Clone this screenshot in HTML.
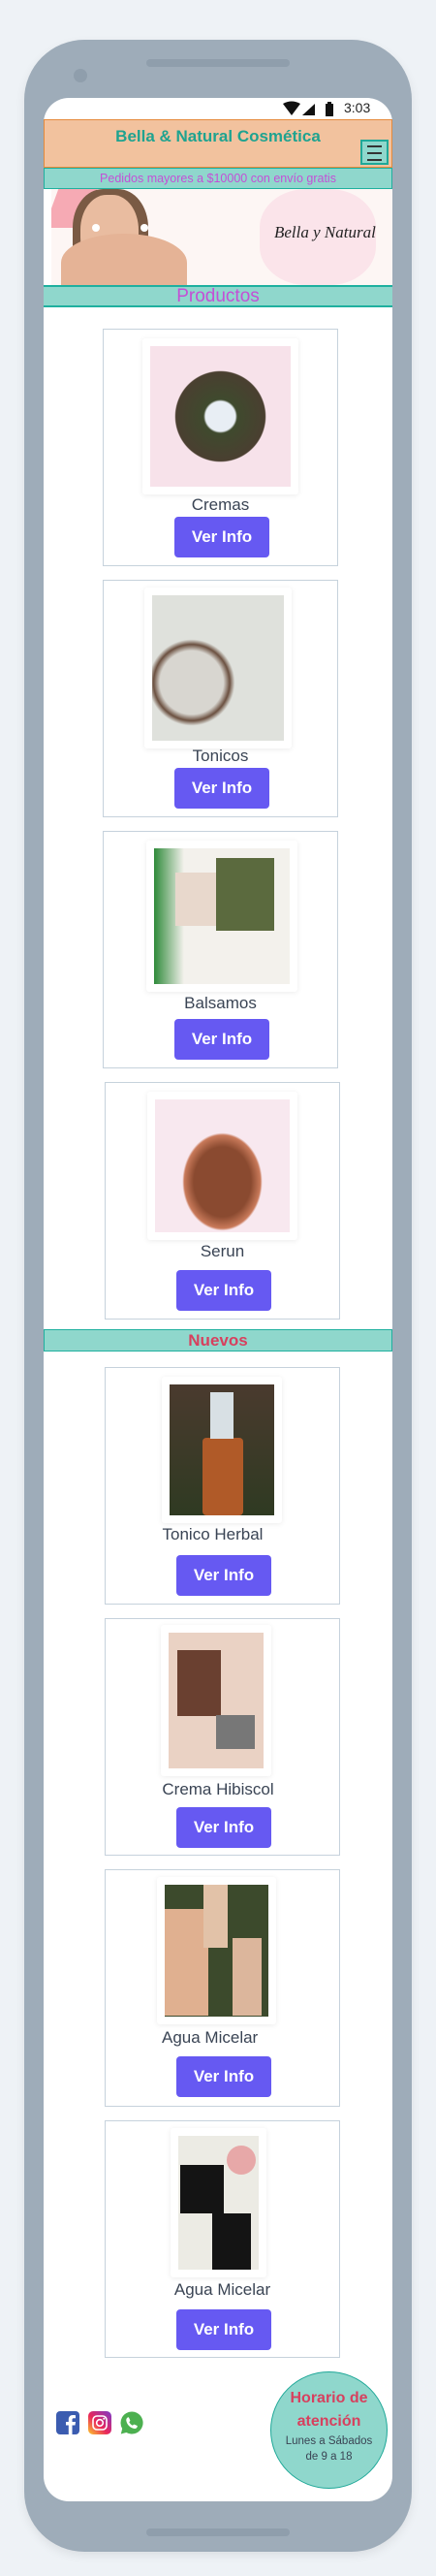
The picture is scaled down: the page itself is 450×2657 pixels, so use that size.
<!DOCTYPE html>
<html><head><meta charset="utf-8">
<style>
*{margin:0;padding:0;box-sizing:border-box}
body{width:450px;height:2657px;background:#eef2f6;position:relative;overflow:hidden;font-family:"Liberation Sans",sans-serif}
.a{position:absolute}
.phone{left:25px;top:41px;width:400px;height:2591px;background:#9eacb9;border-radius:62px;box-shadow:0 4px 10px rgba(0,0,0,.08)}
.screen{left:45px;top:101px;width:360px;height:2479px;background:#fff;border-radius:26px;overflow:hidden}
.card{border:1.5px solid #c6d2dc;width:243px;height:245px;background:#fff}
.frame{background:#fff;box-shadow:0 1px 6px rgba(0,0,0,.08);border-radius:3px}
.img{position:absolute;left:8px;top:8px;right:8px;bottom:8px}
.lbl{font-size:17px;color:#3a4454;text-align:center;white-space:nowrap}
.btn{width:98px;height:42px;background:#6659f2;border-radius:4px;color:#fff;font-weight:bold;font-size:17px;text-align:center;line-height:42px}
</style></head><body>
<div class="a phone"></div>
<div class="a" style="left:151px;top:61px;width:148px;height:8px;border-radius:4px;background:#8f9eac"></div>
<div class="a" style="left:76px;top:71px;width:14px;height:14px;border-radius:50%;background:#8f9eac"></div>
<div class="a" style="left:151px;top:2608px;width:148px;height:8px;border-radius:4px;background:#8f9eac"></div>
<div class="a screen"></div>
<!-- status bar -->
<svg class="a" style="left:290px;top:104px" width="60" height="18"><path d="M2 3 Q11 -2 20 3 L11 15 Z" fill="#111"/><path d="M22 15 L35 3 L35 15 Z" fill="#111"/><rect x="46" y="3" width="8" height="13" fill="#111"/><rect x="48" y="1" width="4" height="3" fill="#111"/></svg>
<div class="a" style="left:355px;top:103px;font-size:14px;color:#222">3:03</div>
<!-- header -->
<div class="a" style="left:45px;top:123px;width:360px;height:50px;background:#f2c29e;border:1px solid #e58a3c"></div>
<div class="a" style="left:45px;top:131px;width:360px;text-align:center;font-size:17px;font-weight:bold;color:#1fa390">Bella &amp; Natural Cosmética</div>
<div class="a" style="left:372px;top:144px;width:29px;height:26px;background:#8fd7cc;border:2px solid #1fa898"></div>
<div class="a" style="left:379px;top:150px;width:15px;height:1.5px;background:#333"></div>
<div class="a" style="left:379px;top:157px;width:15px;height:1.5px;background:#333"></div>
<div class="a" style="left:379px;top:164px;width:15px;height:1.5px;background:#333"></div>
<div class="a" style="left:45px;top:173px;width:360px;height:22px;background:#8fd7cc;border:1px solid #1fb09f;text-align:center;font-size:12.5px;color:#c44fd6;line-height:20px">Pedidos mayores a $10000 con envío gratis</div>
<!-- hero -->
<div class="a" style="left:53px;top:195px;width:352px;height:99px;background:#fdf6f4;overflow:hidden">
 <div class="a" style="left:0;top:0;width:40px;height:40px;background:#f6aab4;transform:skewX(-20deg)"></div>
 <div class="a" style="left:22px;top:0;width:78px;height:99px;background:#7a5a44;border-radius:40% 40% 0 0"></div>
 <div class="a" style="left:30px;top:6px;width:60px;height:80px;background:#e9bca0;border-radius:45%"></div>
 <div class="a" style="left:10px;top:46px;width:130px;height:60px;background:#e5b396;border-radius:50% 50% 0 0"></div>
 <div class="a" style="left:42px;top:36px;width:8px;height:8px;background:#fff;border-radius:50%"></div>
 <div class="a" style="left:92px;top:36px;width:8px;height:8px;background:#fff;border-radius:50%"></div>
 <div class="a" style="left:215px;top:0;width:120px;height:99px;background:#fbe4ea;border-radius:40%"></div>
 <div class="a" style="left:230px;top:35px;font-family:'Liberation Serif',serif;font-style:italic;font-size:17px;color:#222">Bella y Natural</div>
</div>
<div class="a" style="left:45px;top:294px;width:360px;height:23px;background:#8fd7cc;border-top:2px solid #1fb09f;border-bottom:2px solid #1fb09f;text-align:center;font-size:19px;color:#c44fd6;line-height:19px">Productos</div>

<!-- cards section 1 -->
<div class="a card" style="left:106px;top:339px"></div>
<div class="a frame" style="left:147px;top:349px;width:161px;height:161px"><div class="img" style="background:radial-gradient(circle at 50% 50%,#e8eef4 15%,#3f4a2e 17%,#4a3f30 45%,#f7e2ea 46%)"></div></div>
<div class="a lbl" style="left:106px;top:511px;width:243px">Cremas</div>
<div class="a btn" style="left:180px;top:533px">Ver Info</div>

<div class="a card" style="left:106px;top:598px"></div>
<div class="a frame" style="left:149px;top:606px;width:152px;height:166px"><div class="img" style="background:radial-gradient(circle at 30% 60%,#d8d6d0 25%,#6b5040 30%,#dfe1dc 34%),#dfe1dc"></div></div>
<div class="a lbl" style="left:106px;top:770px;width:243px">Tonicos</div>
<div class="a btn" style="left:180px;top:792px">Ver Info</div>

<div class="a card" style="left:106px;top:857px"></div>
<div class="a frame" style="left:151px;top:867px;width:156px;height:156px"><div class="img" style="background:linear-gradient(90deg,#2f8a3a 0,#f3f1ec 22%);"><div class="a" style="left:22px;top:25px;width:42px;height:55px;background:#e8d8cc"></div><div class="a" style="left:64px;top:10px;width:60px;height:75px;background:#5b6a3e"></div></div></div>
<div class="a lbl" style="left:106px;top:1025px;width:243px">Balsamos</div>
<div class="a btn" style="left:180px;top:1051px">Ver Info</div>

<div class="a card" style="left:108px;top:1116px"></div>
<div class="a frame" style="left:152px;top:1126px;width:155px;height:153px"><div class="img" style="background:radial-gradient(ellipse at 50% 62%,#8a4a30 30%,#c97a5a 40%,#f8e8ef 42%)"></div></div>
<div class="a lbl" style="left:108px;top:1281px;width:243px">Serun</div>
<div class="a btn" style="left:182px;top:1310px">Ver Info</div>

<div class="a" style="left:45px;top:1371px;width:360px;height:23px;background:#8fd7cc;border:1px solid #1fb09f;text-align:center;font-size:17px;font-weight:bold;color:#d7405e;line-height:21px">Nuevos</div>

<!-- cards section 2 -->
<div class="a card" style="left:108px;top:1410px"></div>
<div class="a frame" style="left:167px;top:1420px;width:124px;height:151px"><div class="img" style="background:linear-gradient(#4a3a2e,#2f3a22)"><div class="a" style="left:34px;top:55px;width:42px;height:80px;background:#b05a28;border-radius:4px"></div><div class="a" style="left:42px;top:8px;width:24px;height:48px;background:#d8e0e4"></div></div></div>
<div class="a lbl" style="left:98px;top:1573px;width:243px">Tonico Herbal</div>
<div class="a btn" style="left:182px;top:1604px">Ver Info</div>

<div class="a card" style="left:108px;top:1669px"></div>
<div class="a frame" style="left:166px;top:1676px;width:114px;height:156px"><div class="img" style="background:#ead2c4"><div class="a" style="left:9px;top:18px;width:45px;height:68px;background:#6a4030"></div><div class="a" style="left:49px;top:85px;width:40px;height:35px;background:#777"></div></div></div>
<div class="a lbl" style="left:167px;top:1836px;width:116px">Crema Hibiscol</div>
<div class="a btn" style="left:182px;top:1864px">Ver Info</div>

<div class="a card" style="left:108px;top:1928px"></div>
<div class="a frame" style="left:162px;top:1936px;width:123px;height:152px"><div class="img" style="background:#3c4a2c"><div class="a" style="left:0;top:25px;width:45px;height:110px;background:#e0b090"></div><div class="a" style="left:40px;top:0;width:25px;height:65px;background:#e2c2a8"></div><div class="a" style="left:70px;top:55px;width:30px;height:80px;background:#dcb69c"></div></div></div>
<div class="a lbl" style="left:167px;top:2092px;width:100px;text-align:left">Agua Micelar</div>
<div class="a btn" style="left:182px;top:2121px">Ver Info</div>

<div class="a card" style="left:108px;top:2187px"></div>
<div class="a frame" style="left:176px;top:2195px;width:99px;height:154px"><div class="img" style="background:#ecebe4"><div class="a" style="left:2px;top:30px;width:45px;height:50px;background:#141414"></div><div class="a" style="left:50px;top:10px;width:30px;height:30px;background:#e7a8a8;border-radius:50%"></div><div class="a" style="left:35px;top:80px;width:40px;height:58px;background:#141414"></div></div></div>
<div class="a lbl" style="left:108px;top:2352px;width:243px">Agua Micelar</div>
<div class="a btn" style="left:182px;top:2382px">Ver Info</div>

<!-- footer -->
<svg class="a" style="left:58px;top:2487px" width="24" height="24"><rect width="24" height="24" rx="4" fill="#3b5cb0"/><path d="M16.5 24V14.5h3l.5-3.5h-3.5V9c0-1 .3-1.7 1.8-1.7H20V4.2c-.3 0-1.4-.2-2.7-.2-2.7 0-4.5 1.6-4.5 4.6V11H10v3.5h2.8V24z" fill="#fff"/></svg>
<svg class="a" style="left:91px;top:2487px" width="24" height="24"><defs><linearGradient id="ig" x1="0" y1="1" x2="1" y2="0"><stop offset="0" stop-color="#fdc92c"/><stop offset=".45" stop-color="#e9265c"/><stop offset="1" stop-color="#7b3bc9"/></linearGradient></defs><rect width="24" height="24" rx="5" fill="url(#ig)"/><rect x="5" y="5" width="14" height="14" rx="4" fill="none" stroke="#fff" stroke-width="1.6"/><circle cx="12" cy="12" r="3.3" fill="none" stroke="#fff" stroke-width="1.6"/><circle cx="16.3" cy="7.7" r="1" fill="#fff"/></svg>
<svg class="a" style="left:124px;top:2487px" width="24" height="24"><path d="M12 0.5a11.5 11.5 0 0 0-9.8 17.5L.8 23.5l5.6-1.5A11.5 11.5 0 1 0 12 .5z" fill="#4cb050"/><path d="M8.2 6.2c.4 0 .7 0 .9.5l1.2 2.7c.1.3 0 .6-.2.8l-.8 1c.8 1.6 2 2.8 3.6 3.6l1-.9c.2-.2.5-.3.8-.2l2.7 1.2c.4.2.5.5.4.9-.3 1.5-1.6 2.4-3.1 2.2-4.2-.6-7.8-4.2-8.4-8.4-.2-1.5.7-3 1.9-3.4z" fill="#fff"/></svg>
<div class="a" style="left:279px;top:2446px;width:121px;height:121px;border-radius:50%;background:#8fd7cc;border:1.5px solid #1fa898"></div>
<div class="a" style="left:279px;top:2462px;width:121px;text-align:center;font-size:16px;font-weight:bold;color:#d7405e;line-height:24px">Horario de<br>atención</div>
<div class="a" style="left:279px;top:2510px;width:121px;text-align:center;font-size:11.5px;color:#3a4454;line-height:16px">Lunes a Sábados<br>de 9 a 18</div>
</body></html>
